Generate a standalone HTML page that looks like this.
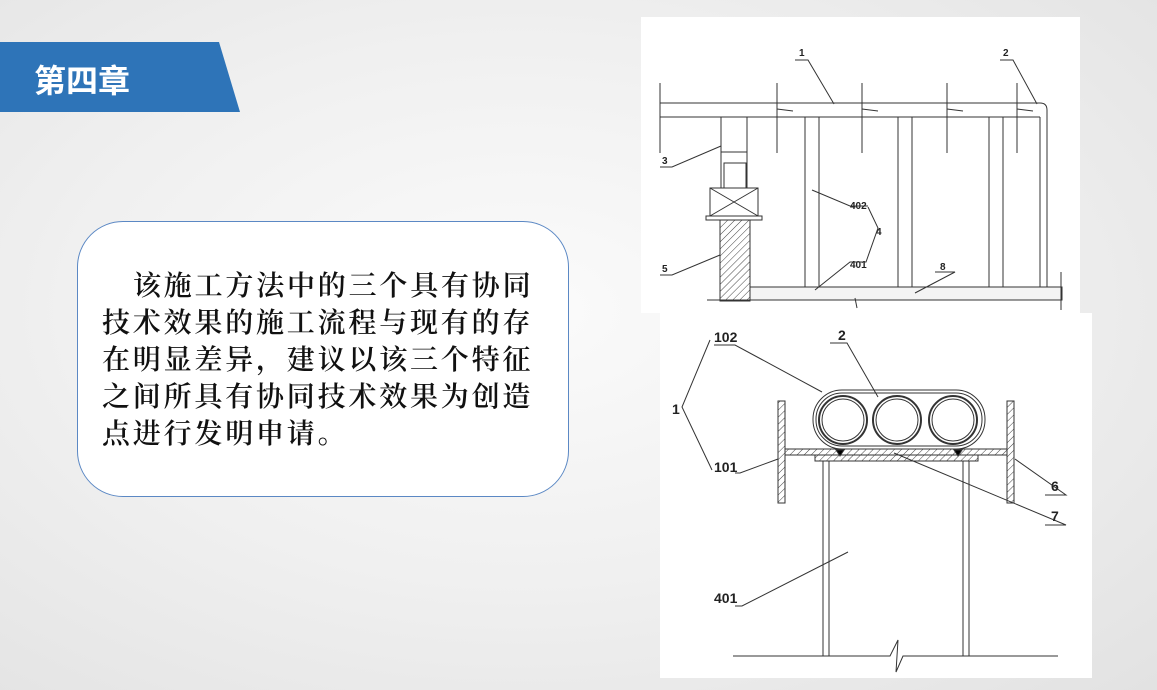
<!DOCTYPE html>
<html><head><meta charset="utf-8"><style>
html,body{margin:0;padding:0}
body{width:1157px;height:690px;overflow:hidden;position:relative;background:radial-gradient(ellipse at 45% 45%,#fbfbfb 0%,#f0f0f0 50%,#e2e2e2 100%);font-family:"Liberation Sans","Noto Sans CJK SC",sans-serif}
.title{position:absolute;left:0;top:42px;width:240px;height:70px;background:#2e74b8;clip-path:polygon(0 0,219px 0,240px 70px,0 70px)}
.title span{position:absolute;left:34px;top:14px;color:#fff;font-size:32px;font-weight:bold;font-family:"Noto Sans CJK SC",sans-serif}
.box{position:absolute;left:77px;top:221px;width:490px;height:274px;border:1.5px solid #5b88c4;border-radius:46px;background:#fff}
.txt{position:absolute;left:102px;top:266px;width:500px;white-space:nowrap;font-family:"Noto Serif CJK SC","Noto Sans CJK SC",serif;font-size:28px;line-height:37px;letter-spacing:2.8px;color:#111;font-weight:600}
.p1{position:absolute;left:641px;top:17px;width:439px;height:296px;background:#fff}
.p2{position:absolute;left:660px;top:313px;width:432px;height:365px;background:#fff}
svg{position:absolute;left:0;top:0}
</style></head><body>
<div class="title"><span>第四章</span></div>
<div class="box"></div>
<div class="txt"><span style="padding-left:31px">该施工方法中的三个具有协同</span><br>技术效果的施工流程与现有的存<br>在明显差异，建议以该三个特征<br>之间所具有协同技术效果为创造<br>点进行发明申请。</div>
<div class="p1"></div><div class="p2"></div>
<svg width="1157" height="690" viewBox="0 0 1157 690" fill="none" stroke="#333" stroke-width="1" font-family="Liberation Sans,sans-serif" font-size="10">
<defs><pattern id="h" width="5" height="5" patternUnits="userSpaceOnUse" patternTransform="rotate(45)"><line x1="0" y1="0" x2="0" y2="5" stroke="#444"/></pattern></defs>
<line x1="660" y1="103" x2="1040" y2="103"/><line x1="660" y1="117" x2="1040" y2="117"/>
<line x1="660" y1="83" x2="660" y2="153"/>
<path d="M1040 103 Q1047 103 1047 110 L1047 300 M1040 117 L1040 300"/>
<g><line x1="777" y1="83" x2="777" y2="153"/><line x1="862" y1="83" x2="862" y2="153"/><line x1="947" y1="83" x2="947" y2="153"/><line x1="1017" y1="83" x2="1017" y2="153"/>
<path d="M777 109 L793 111 M862 109 L878 111 M947 109 L963 111 M1017 109 L1033 111"/></g>
<rect x="721" y="117" width="26" height="71"/><line x1="721" y1="152" x2="747" y2="152"/><rect x="724" y="163" width="22" height="25"/>
<rect x="710" y="188" width="48" height="28"/><path d="M710 188 L758 216 M758 188 L710 216"/>
<rect x="706" y="216" width="56" height="4"/>
<rect x="720" y="220" width="30" height="81" fill="url(#h)"/>
<path d="M805 117V300 M819 117V300 M898 117V300 M912 117V300 M989 117V300 M1003 117V300"/>
<rect x="750" y="287" width="312" height="13" fill="#f4f4f4"/>
<line x1="707" y1="300" x2="1062" y2="300"/><line x1="1061" y1="272" x2="1061" y2="310"/>
<path d="M855 298 L857 308"/>
<g fill="#222" stroke="none" font-weight="bold"><text x="799" y="56">1</text><text x="1003" y="56">2</text><text x="662" y="164">3</text><text x="662" y="272">5</text><text x="850" y="209">402</text><text x="876" y="235">4</text><text x="850" y="268">401</text><text x="940" y="270">8</text></g>
<path d="M795 60 H808 L834 104 M1000 60 H1013 L1037 104 M660 167 H672 L721 146 M660 275 H672 L720 255 M812 190 L850 206 H868 M868 207 L878 228 L866 262 H850 L815 290 M935 272 H955 L915 293"/>
<rect x="813" y="390" width="172" height="59" rx="29"/><rect x="816" y="393" width="166" height="53" rx="26"/>
<g stroke-width="2"><circle cx="843" cy="420" r="24"/><circle cx="897" cy="420" r="24"/><circle cx="953" cy="420" r="24"/></g>
<circle cx="843" cy="420" r="21"/><circle cx="897" cy="420" r="21"/><circle cx="953" cy="420" r="21"/>
<rect x="778" y="401" width="7" height="102" fill="url(#h)"/><rect x="1007" y="401" width="7" height="102" fill="url(#h)"/>
<rect x="785" y="449" width="222" height="6" fill="url(#h)"/>
<rect x="815" y="455" width="163" height="6" fill="url(#h)"/>
<path d="M836 450 L844 450 L840 456Z M954 450 L962 450 L958 456Z" fill="#000"/>
<path d="M823 461V656 M829 461V656 M963 461V656 M969 461V656"/>
<path d="M733 656 H890 L898 640 L896 672 L903 656 H1058"/>
<g fill="#222" stroke="none" font-size="14" font-weight="bold"><text x="714" y="342">102</text><text x="838" y="340">2</text><text x="672" y="414">1</text><text x="714" y="472">101</text><text x="1051" y="491">6</text><text x="1051" y="521">7</text><text x="714" y="603">401</text></g>
<path d="M714 345 H735 L822 392 M830 343 H847 L878 397 M710 340 L682 407 L712 470 M735 473 H740 L778 459 M1045 495 H1066 L1015 459 M1045 525 H1066 L894 453 M735 606 H742 L848 552"/>
</svg>
</body></html>
